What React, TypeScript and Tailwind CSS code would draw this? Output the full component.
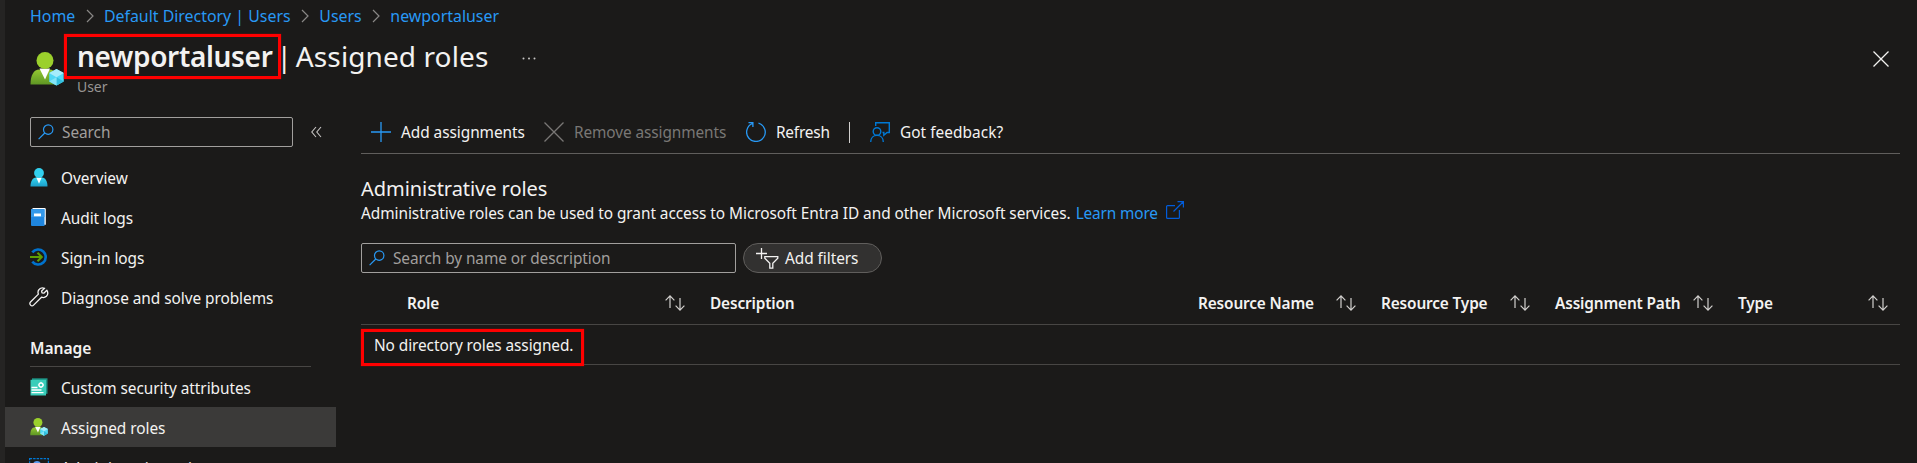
import type { ReactNode } from "react";

function SearchIcon() {
  return (
    <svg width="16" height="16" viewBox="0 0 16 16" fill="none" stroke="#2899f5" strokeWidth="1.2" className="shrink-0">
      <circle cx="10.2" cy="5.6" r="4.7" />
      <path d="M6.8 9 .6 15.2" />
    </svg>
  );
}

function PersonCubeIcon({ size }: { size: number }) {
  return (
    <svg width={size} height={size} viewBox="0 0 34 34" className="shrink-0">
      <defs>
        <linearGradient id="pg" x1="0" y1="0" x2="0" y2="1">
          <stop offset="0" stopColor="#94c832" />
          <stop offset="1" stopColor="#5e9624" />
        </linearGradient>
      </defs>
      <path d="M.5 32.5c0-9 3-15 9-15h10c6 0 9 7 9 15z" fill="url(#pg)" />
      <path d="M9.500 16.500h10.500l-5 11z" fill="#fff" />
      <circle cx="15" cy="8.500" r="8.500" fill="#9bd02c" />
      <path d="M26.500 17l7.300 4v8.500l-7.300 4-7.300-4v-8.500z" fill="#50d8f5" />
      <path d="M26.500 17l7.300 4-7.300 4.200-7.300-4.200z" fill="#a5ecfb" />
      <path d="M26.500 25.200l7.300 4.300-7.300 4z" fill="#32bedd" />
      <path d="M26.500 25.200l-7.300 4.300 7.300 4z" fill="#83e4f7" />
    </svg>
  );
}

function OverviewIcon() {
  return (
    <svg width="18" height="19" viewBox="0 0 18 19">
      <defs>
        <linearGradient id="og" x1="0" y1="0" x2="0" y2="1">
          <stop offset="0" stopColor="#35d6f2" />
          <stop offset="1" stopColor="#1c9fc9" />
        </linearGradient>
      </defs>
      <path d="M.5 18.500c0-5 2-9 5.500-9h6c3.500 0 5.500 4 5.500 9z" fill="url(#og)" />
      <path d="M6.300 9.500h5.400L9 15.700z" fill="#fff" />
      <circle cx="9" cy="5" r="4.900" fill="#32d0ee" />
    </svg>
  );
}

function AuditIcon() {
  return (
    <svg width="18" height="18" viewBox="0 0 18 18">
      <path d="M2.500 0h12q1.300 0 1.300 1.200v15.500H14V1.500H2.500z" fill="#fff" />
      <path d="M1 1.200h13.500V18H2q-1 0-1-1z" fill="#1f86df" />
      <path d="M1 1.200h13.500V9H1z" fill="#3499ea" />
      <path d="M4 5.500h7v2.800H4z" fill="#fff" />
    </svg>
  );
}

function SignInIcon() {
  return (
    <svg width="18" height="18" viewBox="0 0 18 18" fill="none">
      <path d="M2.300 4.400A7.500 7.500 0 1 1 2.300 13.600" stroke="#0072cc" strokeWidth="2.600" />
      <path d="M0 9h11M7.500 4.700 11.800 9l-4.300 4.300" stroke="#5ea002" strokeWidth="2" />
    </svg>
  );
}

function WrenchIcon() {
  return (
    <svg width="20" height="20" viewBox="0 0 20 20" fill="none" stroke="#f3f2f1" strokeWidth="1.300" className="-ml-px shrink-0">
      <path d="M17.800 3.200 14.800 6.200 13 5.800 12.600 4l3-2.700C13.500.5 11.500.9 10.300 2.200 9 3.500 8.700 5.400 9.400 7.100L1.500 15c-.9.9-.9 2.300 0 3.100.9.900 2.200.9 3.100 0l7.900-7.900c1.700.7 3.600.3 4.900-.9 1.600-1.600 1.700-4 .4-6.100z" strokeLinejoin="round" />
    </svg>
  );
}

function AttributesIcon() {
  return (
    <svg width="18" height="18" viewBox="0 0 18 18" fill="none">
      <path d="M2 .3h15.500v15.500H2z" fill="#1c9486" />
      <path d="M.5 1.800H16V17.500H.5z" fill="#39cdb9" />
      <circle cx="11" cy="7" r="2" stroke="#fff" strokeWidth="1.300" />
      <path d="M11 3.900v1M11 9v1M7.900 7h1M13 7h1" stroke="#fff" />
      <path d="M1.500 9.500h6M1.500 12h10M1.500 14.600h12" stroke="#fff" strokeWidth="1.300" />
    </svg>
  );
}

function UnitsIcon() {
  return (
    <svg width="20" height="20" viewBox="0 0 20 20" fill="none" className="mt-[2px] -ml-px shrink-0">
      <path d="M.6.6h18.800v18.800H.6z" stroke="#0078d4" strokeWidth="1.200" strokeDasharray="2.500 1" />
      <circle cx="8" cy="7" r="4" fill="#5b9bf0" />
      <path d="M2 18c0-5 2.500-7 6-7s6 2 6 7z" fill="#5b9bf0" />
    </svg>
  );
}

function SortIcon() {
  return (
    <svg width="20" height="16" viewBox="0 0 20 16" fill="none" stroke="#d2d0ce" strokeWidth="1.200" className="shrink-0">
      <path d="M5 13V.9M.6 5.300 5 .9l4.400 4.400M15 3v12M10.600 10.700 15 15.100l4.400-4.400" />
    </svg>
  );
}

function Crumb({ children }: { children: ReactNode }) {
  return <a className="text-[#2899f5]">{children}</a>;
}

function CrumbArrow() {
  return (
    <svg width="8" height="14" viewBox="0 0 8 14" fill="none" stroke="#8a8886" strokeWidth="1.200" className="mr-[10.200px] ml-[10.500px] shrink-0">
      <path d="M1 1l6 6-6 6" />
    </svg>
  );
}

function NavItem({ icon, label, active = false }: { icon: ReactNode; label: string; active?: boolean }) {
  return (
    <div className={`flex h-10 w-[331px] shrink-0 items-center pl-[25px] ${active ? "bg-[#3b3a39]" : ""}`}>
      <span className="flex w-[31px] items-center">{icon}</span>
      <span className="pt-[3px]">{label}</span>
    </div>
  );
}

const columns = [
  { label: "Role", width: "w-[303px]" },
  { label: "Description", width: "w-[488px]", unsorted: true },
  { label: "Resource Name", width: "w-[183px]" },
  { label: "Resource Type", width: "w-[174px]" },
  { label: "Assignment Path", width: "w-[183px]" },
  { label: "Type", width: "w-[175px]" },
];

function Sidebar() {
  return (
    <nav className="flex w-[356px] shrink-0 flex-col">
      <div className="ml-[25px] flex items-center">
        <div className="flex h-[30px] w-[263px] items-center gap-2 rounded-xs border border-[#a19f9d] pl-[7px] text-[#a19f9d]">
          <SearchIcon />
          <span className="pt-[2px]">Search</span>
        </div>
        <svg width="11" height="12" viewBox="0 0 11 12" fill="none" stroke="#c8c6c4" strokeWidth="1.100" className="ml-[18px]">
          <path d="M5 1 .8 6 5 11M10 1 5.800 6l4.200 5" />
        </svg>
      </div>
      <div className="flex flex-col pt-[10px]">
        <NavItem icon={<OverviewIcon />} label="Overview" />
        <NavItem icon={<AuditIcon />} label="Audit logs" />
        <NavItem icon={<SignInIcon />} label="Sign-in logs" />
        <NavItem icon={<WrenchIcon />} label="Diagnose and solve problems" />
      </div>
      <div className="ml-[25px] flex h-[50px] w-[281px] shrink-0 items-end border-b border-[#484644] pb-[7px] text-[15.600px] font-semibold">Manage</div>
      <NavItem icon={<AttributesIcon />} label="Custom security attributes" />
      <NavItem icon={<PersonCubeIcon size={18} />} label="Assigned roles" active />
      <NavItem icon={<UnitsIcon />} label="Administrative units" />
    </nav>
  );
}

function Toolbar() {
  return (
    <div className="flex h-[37px] items-start border-b border-[#605e5c]">
      <div className="flex h-[30px] items-center pl-[10px]">
        <svg width="20" height="20" viewBox="0 0 20 20" stroke="#2899f5" strokeWidth="1.300">
          <path d="M10 0v20M0 10h20" />
        </svg>
        <span className="ml-[10px] w-[143px] pt-[2px]">Add assignments</span>
        <svg width="20" height="20" viewBox="0 0 20 20" stroke="#797775" strokeWidth="1.300">
          <path d="M.5.5l19 19M19.500.5l-19 19" />
        </svg>
        <span className="ml-[10px] w-[172px] pt-[2px] tracking-[-0.100px] text-[#797775]">Remove assignments</span>
        <svg width="20" height="20" viewBox="0 0 20 20" fill="none" stroke="#2899f5" strokeWidth="1.300">
          <path d="M12.500 1.200A9.300 9.300 0 1 1 6.500 1.500M2.500.7h4.400v4.300" />
        </svg>
        <span className="ml-[10px] w-[73px] pt-[2px] tracking-[-0.200px]">Refresh</span>
        <span className="h-[21px] w-px bg-[#d2d0ce]" />
        <svg width="20" height="20" viewBox="0 0 20 20" fill="none" stroke="#0078d4" strokeWidth="1.400" className="ml-[20px]">
          <path d="M5.700 4V.7h13.600v9.800h-2.200l-3.300 2.700v-2.700h-1.300" />
          <circle cx="7" cy="9.500" r="3.800" />
          <path d="M.7 20c0-4 2.700-6.600 6.300-6.600s6.300 2.600 6.300 6.600" />
        </svg>
        <span className="ml-[10px] pt-[2px] tracking-[0.050px]">Got feedback?</span>
      </div>
    </div>
  );
}

function RolesPanel() {
  return (
    <main className="flex w-[1539px] flex-col">
      <Toolbar />
      <h2 className="mt-[21px] h-[27px] text-[20px] leading-[27px]">Administrative roles</h2>
      <p className="flex h-[22px] items-center leading-[22px]">
        <span className="pt-[2px]">Administrative roles can be used to grant access to Microsoft Entra ID and other Microsoft services.</span>
        <a className="ml-[5px] pt-[2px] tracking-[-0.150px] text-[#2899f5]">Learn more</a>
        <svg width="18" height="18" viewBox="0 0 18 18" fill="none" stroke="#015cda" strokeWidth="1.200" className="mb-[6px] ml-[8px]">
          <path d="M9 4.600H1.600q-1 0-1 1v10.800q0 1 1 1h10.800q1 0 1-1V9M7.500 10.500 17 1M11.500.6h5.900v5.900" />
        </svg>
      </p>
      <div className="mt-[19px] flex h-[30px] shrink-0 gap-[7px]">
        <div className="flex w-[375px] items-center gap-2 rounded-xs border border-[#a19f9d] pl-[7px] text-[#a19f9d]">
          <SearchIcon />
          <span className="pt-[2px] tracking-[-0.080px]">Search by name or description</span>
        </div>
        <div className="flex w-[139px] items-center rounded-full border border-[#605e5c] bg-[#323130] pl-[12px]">
          <svg width="23" height="21" viewBox="0 0 23 21" fill="none" stroke="#f3f2f1" strokeWidth="1.300">
            <path d="M5.500 0v11M0 5.500h11" />
            <path d="M8.800 8.700h13v1.500l-5 5v5h-3v-5l-5-5z" />
          </svg>
          <span className="ml-[6px] pt-[2px]">Add filters</span>
        </div>
      </div>
      <div className="flex h-[52px] shrink-0 items-center border-b border-[#484644] pt-[9px] pl-[46px] font-semibold tracking-[-0.150px]">
        {columns.map((c) => (
          <div key={c.label} className={`flex shrink-0 items-center justify-between pr-[25px] ${c.width}`}>
            <span className="pt-[2px] whitespace-nowrap">{c.label}</span>
            {!c.unsorted && <SortIcon />}
          </div>
        ))}
      </div>
      <div className="relative flex h-10 shrink-0 items-center border-b border-[#484644] pt-[3px] pl-[13px]">
        <span className="tracking-[-0.080px]">No directory roles assigned.</span>
        <div className="absolute top-[4px] left-0 h-[37px] w-[223px] border-3 border-[#fe0000] shadow-[0_0_1px_#c00000]" />
      </div>
    </main>
  );
}

export default function App() {
  return (
    <div className="flex h-[463px] w-[1917px] overflow-hidden bg-[#1b1a19] font-['Noto_Sans',sans-serif] text-[15.400px] leading-[22px] tracking-[-0.050px] text-[#f3f2f1]">
      <div className="w-[5px] shrink-0 bg-[#252423]" />
      <div className="flex w-[1912px] flex-col">
        <div className="flex h-8 shrink-0 items-center pl-[25px] text-[15.900px] tracking-normal">
          <Crumb>Home</Crumb>
          <CrumbArrow />
          <Crumb>Default Directory | Users</Crumb>
          <CrumbArrow />
          <Crumb>Users</Crumb>
          <CrumbArrow />
          <Crumb>newportaluser</Crumb>
        </div>
        <header className="flex h-[85px] shrink-0 pl-[25px]">
          <div className="pt-5">
            <PersonCubeIcon size={34} />
          </div>
          <div className="ml-[13px] flex w-[1782px] flex-col">
            <h1 className="flex h-[44px] items-start pt-0.5 text-[28px] leading-[44px]">
              <span className="relative font-semibold tracking-[-0.330px]">
                newportaluser
                <span className="absolute top-0 -left-[13px] h-[45px] w-[217px] border-3 border-[#fe0000] shadow-[0_0_1px_#c00000]" />
              </span>
              <span className="ml-[4px]">|</span>
              <span className="ml-[4px] tracking-[0.100px]">Assigned roles</span>
              <svg width="15" height="3" viewBox="0 0 15 3" fill="#c8c6c4" className="mt-[23px] ml-[34px]">
                <circle cx="1.500" cy="1.500" r="1" />
                <circle cx="7" cy="1.500" r="1" />
                <circle cx="12.500" cy="1.500" r="1" />
              </svg>
            </h1>
            <div className="text-[14px] leading-[22px] text-[#979593]">User</div>
          </div>
          <svg width="16" height="16" viewBox="0 0 16 16" stroke="#f3f2f1" strokeWidth="1.300" className="mt-[19px] ml-[14px]">
            <path d="M.5.5l15 15M15.500.5l-15 15" />
          </svg>
        </header>
        <div className="flex">
          <Sidebar />
          <RolesPanel />
        </div>
      </div>
    </div>
  );
}
